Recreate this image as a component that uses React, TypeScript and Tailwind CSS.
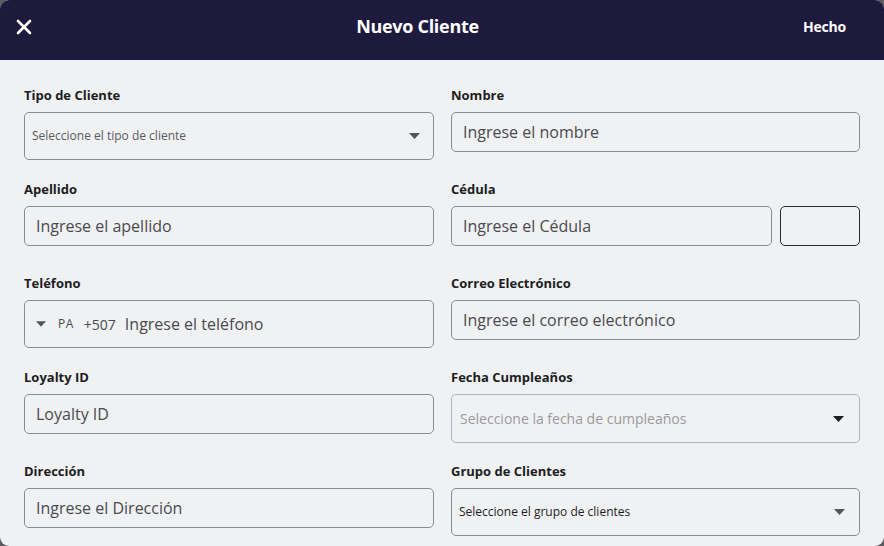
import React from 'react';

function Caret({ className = '' }: { className?: string }) {
  return (
    <svg width="11" height="6" viewBox="0 0 11 6" className={className}>
      <path d="M0 0 L11 0 L5.5 6 Z" fill="currentColor" />
    </svg>
  );
}

function Label({ children }: { children: React.ReactNode }) {
  return <label className="block text-[13px] font-bold text-[#1d1d1f] leading-[17px] mb-[8px]">{children}</label>;
}

function TextInput({ placeholder }: { placeholder: string }) {
  return (
    <div className="h-[40px] border border-[#8c8c8f] rounded-[5px] flex items-center px-[11px] text-[16px] text-[#4a4a4f]">
      {placeholder}
    </div>
  );
}

export default function App() {
  return (
    <div className="w-[884px] h-[546px] bg-[#5c5c5e]" style={{ fontFamily: '"Open Sans", "Noto Sans", sans-serif' }}>
      <div className="w-full h-full rounded-[9px] overflow-hidden bg-[#f0f1f3] flex flex-col">
        <header className="h-[60px] bg-[#1e1a3d] flex items-center justify-between px-[16px] pb-[8px] shrink-0">
          <svg width="16" height="16" viewBox="0 0 16 16" className="mt-[2px]">
            <path d="M2 2 L14 14 M14 2 L2 14" stroke="white" strokeWidth="2.6" strokeLinecap="round" />
          </svg>
          <h1 className="text-white font-bold text-[18px] tracking-[-0.3px]">Nuevo Cliente</h1>
          <button className="text-white font-bold text-[14px] mr-[22px] tracking-[-0.2px]">Hecho</button>
        </header>

        <div className="grid grid-cols-[410px_409px] gap-x-[17px] auto-rows-[94px] px-[24px] pt-[27px]">
          <div>
            <Label>Tipo de Cliente</Label>
            <div className="h-[48px] border border-[#8c8c8f] rounded-[5px] flex items-center justify-between pl-[7px] pr-[13px] text-[12px] text-[#5a5a5f]">
              <span>Seleccione el tipo de cliente</span>
              <Caret className="text-[#555]" />
            </div>
          </div>
          <div>
            <Label>Nombre</Label>
            <TextInput placeholder="Ingrese el nombre" />
          </div>

          <div>
            <Label>Apellido</Label>
            <TextInput placeholder="Ingrese el apellido" />
          </div>
          <div>
            <Label>Cédula</Label>
            <div className="flex gap-[8px]">
              <div className="flex-1">
                <TextInput placeholder="Ingrese el Cédula" />
              </div>
              <div className="w-[80px] h-[40px] border border-[#2a2a2e] rounded-[5px]" />
            </div>
          </div>

          <div>
            <Label>Teléfono</Label>
            <div className="h-[48px] border border-[#8c8c8f] rounded-[5px] flex items-center pl-[11px] text-[#4a4a4f]">
              <Caret className="text-[#555] mr-[12px] w-[10px]" />
              <span className="text-[12px] tracking-[0.5px] mr-[10px]">PA</span>
              <span className="text-[14px] mr-[9px]">+507</span>
              <span className="text-[16px]">Ingrese el teléfono</span>
            </div>
          </div>
          <div>
            <Label>Correo Electrónico</Label>
            <TextInput placeholder="Ingrese el correo electrónico" />
          </div>

          <div>
            <Label>Loyalty ID</Label>
            <TextInput placeholder="Loyalty ID" />
          </div>
          <div>
            <Label>Fecha Cumpleaños</Label>
            <div className="h-[49px] border border-[#b3b3b6] rounded-[5px] flex items-center justify-between pl-[8px] pr-[15px] text-[14px] text-[#9a9a9e]">
              <span>Seleccione la fecha de cumpleaños</span>
              <Caret className="text-[#1d1d1f]" />
            </div>
          </div>

          <div>
            <Label>Dirección</Label>
            <TextInput placeholder="Ingrese el Dirección" />
          </div>
          <div>
            <Label>Grupo de Clientes</Label>
            <div className="h-[48px] border border-[#8c8c8f] rounded-[5px] flex items-center justify-between pl-[7px] pr-[14px] text-[12px] text-[#1d1d1f]">
              <span>Seleccione el grupo de clientes</span>
              <Caret className="text-[#555]" />
            </div>
          </div>
        </div>
      </div>
    </div>
  );
}
